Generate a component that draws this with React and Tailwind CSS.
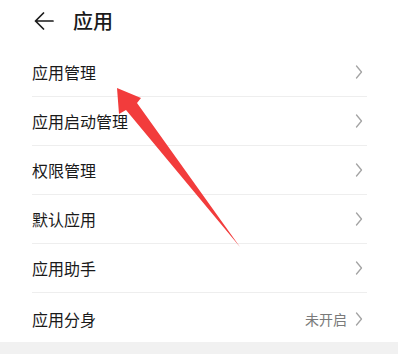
import React from 'react';

const items = [
  { label: '应用管理' },
  { label: '应用启动管理' },
  { label: '权限管理' },
  { label: '默认应用' },
  { label: '应用助手' },
  { label: '应用分身', value: '未开启', last: true },
];

function Chevron() {
  return (
    <svg width="8" height="14" viewBox="0 0 8 14" fill="none" className="shrink-0">
      <path d="M1.5 1 L6.5 7 L1.5 13" stroke="#a3a3a3" strokeWidth="1.3" strokeLinecap="round" strokeLinejoin="round" />
    </svg>
  );
}

export default function App() {
  return (
    <div
      className="relative w-[398px] h-[354px] overflow-hidden bg-white text-[#1a1a1a]"
      style={{ fontFamily: '"Noto Sans CJK SC", "Noto Sans", sans-serif' }}
    >
      {/* header */}
      <div className="flex items-center h-[42px] pl-[34px]">
        <svg width="20" height="18" viewBox="0 0 20 18" fill="none">
          <path d="M19 9 H1.5 M9.5 1 L1.5 9 L9.5 17" stroke="#1a1a1a" strokeWidth="1.7" strokeLinecap="round" strokeLinejoin="round" />
        </svg>
        <span className="ml-[19px] text-[20px] font-medium leading-none">应用</span>
      </div>

      {/* list */}
      <div className="mt-[6px] pl-[32px] pr-[31px]">
        {items.map((item) => (
          <div
            key={item.label}
            className={`flex items-center h-[49px] ${item.last ? 'pt-[3px]' : 'border-b border-[#eeeeee]'}`}
          >
            <span className="flex-1 text-[16px] leading-none">{item.label}</span>
            {item.value && <span className="mr-[8px] text-[14px] leading-none text-[#7a7a7a]">{item.value}</span>}
            <div className="mr-[4px] flex items-center">
              <Chevron />
            </div>
          </div>
        ))}
      </div>

      <div className="h-[20px] bg-[#f1f1f1]" />

      {/* annotation arrow */}
      <svg className="absolute left-0 top-0 pointer-events-none" width="398" height="354" viewBox="0 0 398 354">
        <polygon points="117,88 141,98 137,103 240,247 126,110 119,114" fill="#f23c3c" />
      </svg>
    </div>
  );
}
